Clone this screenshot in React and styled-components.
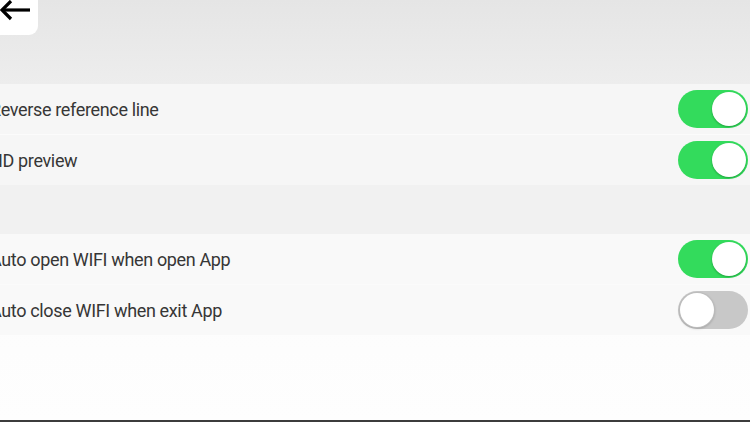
import React, { useState } from 'react';
import styled, { createGlobalStyle } from 'styled-components';

const GlobalStyle = createGlobalStyle`
  html, body {
    margin: 0;
    padding: 0;
    height: 100%;
    overflow: hidden;
  }
  #root { height: 100%; }
`;

const Screen = styled.div`
  height: 422px;
  width: 750px;
  display: flex;
  flex-direction: column;
  font-family: Roboto, "Noto Sans", sans-serif;
  background: linear-gradient(#f8f8f8, #fefefe);
  box-sizing: border-box;
  border-bottom: 2px solid #3c3c3c;
  overflow: hidden;
`;

const Header = styled.header`
  height: 84px;
  flex-shrink: 0;
  background: linear-gradient(#e5e5e5, #ededed);
  display: flex;
  align-items: flex-start;
`;

const BackButton = styled.button`
  width: 38px;
  height: 35px;
  border: none;
  padding: 0;
  background: #ffffff;
  border-bottom-right-radius: 9px;
  display: flex;
  align-items: flex-start;
  justify-content: flex-start;
  cursor: pointer;
`;

const Group = styled.section`
  display: flex;
  flex-direction: column;
  background: ${(p) => p.$bg || '#f6f6f6'};
`;

const Spacer = styled.div`
  height: 49px;
  background: #f1f1f1;
`;

const Row = styled.div`
  height: 50px;
  display: flex;
  align-items: center;
  justify-content: space-between;
  padding: 0 2px 0 0;
  margin-left: -10px;
  & + & {
    border-top: 1px solid #fbfbfb;
  }
`;

const Label = styled.span`
  font-size: 18px;
  color: #363636;
  letter-spacing: -0.35px;
`;

const Track = styled.button`
  width: 70px;
  height: 38px;
  border-radius: 19px;
  border: none;
  padding: 2px;
  display: flex;
  justify-content: ${(p) => (p.$on ? 'flex-end' : 'flex-start')};
  align-items: center;
  background: ${(p) => (p.$on ? '#33db5c' : '#c8c8c8')};
  cursor: pointer;
`;

const Knob = styled.span`
  width: 34px;
  height: 34px;
  border-radius: 50%;
  background: #ffffff;
  box-shadow: ${(p) =>
    p.$on ? '0 1px 2px rgba(0, 90, 20, 0.45)' : '0 0 0 1px #bdbdbd, 0 1px 3px rgba(0,0,0,0.35)'};
`;

function Toggle({ initial }) {
  const [on, setOn] = useState(initial);
  return (
    <Track $on={on} onClick={() => setOn(!on)}>
      <Knob $on={on} />
    </Track>
  );
}

const BackIcon = () => (
  <svg width="32" height="24" viewBox="0 0 32 24" fill="none" stroke="#000" strokeWidth="3.2" strokeLinecap="butt">
    <path d="M30 10H2" />
    <path d="M11 1L2 10l9 9" />
  </svg>
);

export default function App() {
  return (
    <>
      <GlobalStyle />
      <Screen>
        <Header>
          <BackButton aria-label="back">
            <BackIcon />
          </BackButton>
        </Header>
        <Group>
          <Row>
            <Label>Reverse reference line</Label>
            <Toggle initial={true} />
          </Row>
          <Row>
            <Label>HD preview</Label>
            <Toggle initial={true} />
          </Row>
        </Group>
        <Spacer />
        <Group $bg="#f9f9f9">
          <Row>
            <Label>Auto open WIFI when open App</Label>
            <Toggle initial={true} />
          </Row>
          <Row>
            <Label>Auto close WIFI when exit App</Label>
            <Toggle initial={false} />
          </Row>
        </Group>
      </Screen>
    </>
  );
}
